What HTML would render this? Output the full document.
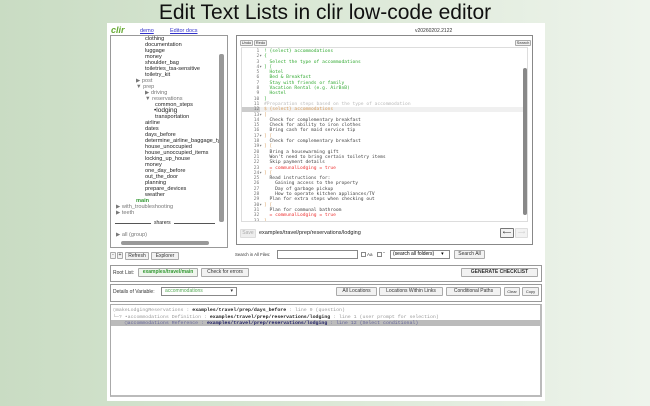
<!DOCTYPE html>
<html><head><meta charset="utf-8"><style>
*{margin:0;padding:0;box-sizing:border-box}
body{width:650px;height:406px;overflow:hidden;background:linear-gradient(90deg,#c9dcc3 0%,#dbe8d6 50%,#eef4ec 100%);font-family:"Liberation Sans",sans-serif;position:relative}
.a{position:absolute;white-space:nowrap}
h1{position:absolute;left:0;width:650px;top:1px;text-align:center;font-weight:normal;font-size:21px;color:#111}
#panel{position:absolute;left:107px;top:23px;width:438px;height:378px;background:#fff}
.tree{left:110px;top:35px;width:118px;height:213px;border:1px solid #999;background:#fff;overflow:hidden;font-size:5.6px;color:#222}
.tree div{position:absolute;white-space:nowrap;line-height:6px}
.btn{position:absolute;border:1px solid #aaa;background:#f2f2f2;font-size:5px;color:#333;text-align:center;border-radius:1px}
.box{position:absolute;border:1px solid #999}
.code{position:absolute;left:241px;top:47px;width:287px;height:175px;border:1px solid #ddd;font-family:"DejaVu Sans Mono",monospace;font-size:4.6px;overflow:hidden}
.ln{position:absolute;left:0;width:20px;text-align:right;color:#777;white-space:pre;line-height:5.3px}
.tx{position:absolute;left:22px;color:#3a3;white-space:pre;line-height:5.3px}
.tx span{line-height:5.3px}
</style></head><body>
<h1>Edit Text Lists in clir low-code editor</h1>
<div id="panel"></div>
<div class="a" style="left:111px;top:25px;font-size:9px;font-style:italic;color:#6a3;font-weight:bold">clir</div>
<div class="a" style="left:140px;top:28px;font-size:5.5px;color:#33c;text-decoration:underline">demo</div>
<div class="a" style="left:170px;top:28px;font-size:5.5px;color:#33c;text-decoration:underline">Editor docs</div>
<div class="a" style="left:415px;top:28px;font-size:5px;color:#333">v20260202.2122</div>

<div class="a tree">
<div style="left:34px;top:0">clothing</div>
<div style="left:34px;top:6px">documentation</div>
<div style="left:34px;top:12px">luggage</div>
<div style="left:34px;top:18px">money</div>
<div style="left:34px;top:24px">shoulder_bag</div>
<div style="left:34px;top:30px">toiletries_tsa-sensitive</div>
<div style="left:34px;top:36px">toiletry_kit</div>
<div style="left:25px;top:42px;color:#777">▶ post</div>
<div style="left:25px;top:48px;color:#777">▼ prep</div>
<div style="left:34px;top:54px;color:#777">▶ driving</div>
<div style="left:34px;top:60px;color:#777">▼ reservations</div>
<div style="left:44px;top:66px">common_steps</div>
<div style="left:43px;top:72px;font-size:6.5px">•lodging</div>
<div style="left:44px;top:78px">transportation</div>
<div style="left:34px;top:84px">airline</div>
<div style="left:34px;top:90px">dates</div>
<div style="left:34px;top:96px">days_before</div>
<div style="left:34px;top:102px">determine_airline_baggage_typ</div>
<div style="left:34px;top:108px">house_unoccupied</div>
<div style="left:34px;top:114px">house_unoccupied_items</div>
<div style="left:34px;top:120px">locking_up_house</div>
<div style="left:34px;top:126px">money</div>
<div style="left:34px;top:132px">one_day_before</div>
<div style="left:34px;top:138px">out_the_door</div>
<div style="left:34px;top:144px">planning</div>
<div style="left:34px;top:150px">prepare_devices</div>
<div style="left:34px;top:156px">weather</div>
<div style="left:25px;top:162px;color:#393;font-weight:bold">main</div>
<div style="left:5px;top:168px;color:#777">▶ with_troubleshooting</div>
<div style="left:5px;top:174px;color:#777">▶ teeth</div>
<div style="left:4px;top:187px;width:100px;height:1px;background:#555"></div>
<div style="left:40px;top:184px;background:#fff;padding:0 3px;font-size:5px">sharers</div>
<div style="left:5px;top:196px;color:#777">▶ all (group)</div>
<div style="left:108px;top:18px;width:5px;height:168px;background:#999;border-radius:2px"></div>
<div style="left:10px;top:205px;width:88px;height:4px;background:#999;border-radius:2px"></div>
</div>

<div class="box" style="left:236px;top:35px;width:297px;height:210px;border:1px solid #888"></div>
<div class="btn" style="left:240px;top:40px;width:13px;height:6px;font-size:4px;line-height:4px">Undo</div>
<div class="btn" style="left:254px;top:40px;width:13px;height:6px;font-size:4px;line-height:4px">Redo</div>
<div class="btn" style="left:515px;top:40px;width:16px;height:6px;font-size:4px;line-height:4px">Search</div>
<div class="code">
<div style="position:absolute;left:0;top:59px;width:285px;height:5.3px;background:#f0f0f0"></div>
<div style="position:absolute;left:0;top:59px;width:18px;height:5.3px;background:#ccc"></div>
<div style="position:absolute;left:281px;top:20px;width:4px;height:147px;background:#888;border-radius:2px"></div>
<div class="ln" style="top:1px">1 
2▾
3 
4▾
5 
6 
7 
8 
9 
10 
11 
12 
13▾
14 
15 
16 
17▾
18 
19▾
20 
21 
22 
23 
24▾
25 
26 
27 
28 
29 
30▾
31 
32 
33 </div>
<div class="tx" style="top:1px">! {select} accommodations
{
  Select the type of accommodations
] [
  Hotel
  Bed &amp; Breakfast
  Stay with friends or family
  Vacation Rental (e.g. AirBnB)
  Hostel
]
<span style="color:#bbb">#Preparation steps based on the type of accommodation</span>
<span style="color:#d9a060">$ {select} accommodations</span>
<span style="color:#d9a060">[</span>
<span style="color:#444">  Check for complementary breakfast
  Check for ability to iron clothes
  Bring cash for maid service tip</span>
<span style="color:#d9a060">] [</span>
<span style="color:#444">  Check for complementary breakfast</span>
<span style="color:#d9a060">] [</span>
<span style="color:#444">  Bring a housewarming gift
  Won't need to bring certain toiletry items
  Skip payment details</span>
<span style="color:#e33">  = communalLodging = true</span>
<span style="color:#d9a060">] [</span>
<span style="color:#444">  Read instructions for:
    Gaining access to the property
    Day of garbage pickup
    How to operate kitchen appliances/TV
  Plan for extra steps when checking out</span>
<span style="color:#d9a060">] [</span>
<span style="color:#444">  Plan for communal bathroom</span>
<span style="color:#e33">  = communalLodging = true</span>
<span style="color:#d9a060">]</span></div>
</div>
<div class="btn" style="left:240px;top:229px;width:16px;height:9px;color:#aaa;background:#eee;border-color:#ddd;line-height:7px">Save</div>
<div class="a" style="left:259px;top:230px;font-size:5.5px;color:#222">examples/travel/prep/reservations/lodging</div>
<div class="btn" style="left:500px;top:228px;width:14px;height:10px;border-color:#777;line-height:8px;font-size:6px">⟵</div>
<div class="btn" style="left:515px;top:228px;width:13px;height:10px;color:#ccc;border-color:#ddd;line-height:8px">⟶</div>

<div class="btn" style="left:110px;top:252px;width:6px;height:7px;line-height:5px">-</div>
<div class="btn" style="left:117px;top:252px;width:6px;height:7px;line-height:5px">+</div>
<div class="btn" style="left:125px;top:252px;width:24px;height:8px;line-height:6px">Refresh</div>
<div class="btn" style="left:151px;top:252px;width:28px;height:8px;line-height:6px">Explorer</div>
<div class="a" style="left:235px;top:252px;font-size:4.3px;color:#333">Search in All Files:</div>
<div class="box" style="left:277px;top:250px;width:81px;height:9px;border-color:#888"></div>
<div class="box" style="left:361px;top:252px;width:5px;height:5px;border-color:#888"></div>
<div class="a" style="left:367px;top:252px;font-size:4.5px;color:#333">Aa</div>
<div class="box" style="left:377px;top:252px;width:5px;height:5px;border-color:#888"></div>
<div class="a" style="left:383px;top:251px;font-size:4.5px;color:#333">"</div>
<div class="box" style="left:390px;top:250px;width:60px;height:9px;border-color:#888;font-size:5px;padding-left:2px;line-height:7px">(search all folders) &nbsp;&nbsp;&nbsp;&nbsp;▾</div>
<div class="btn" style="left:454px;top:250px;width:31px;height:9px;line-height:7px">Search All</div>

<div class="box" style="left:110px;top:265px;width:432px;height:17px"></div>
<div class="a" style="left:113px;top:270px;font-size:5px;color:#333">Root List:</div>
<div class="btn" style="left:138px;top:268px;width:60px;height:9px;color:#393;font-weight:bold;background:#f0f6ee;line-height:7px">examples/travel/main</div>
<div class="btn" style="left:201px;top:268px;width:48px;height:9px;line-height:7px">Check for errors</div>
<div class="btn" style="left:461px;top:268px;width:77px;height:9px;font-weight:bold;line-height:7px">GENERATE CHECKLIST</div>

<div class="box" style="left:110px;top:284px;width:432px;height:18px"></div>
<div class="a" style="left:113px;top:289px;font-size:5px;color:#333">Details of Variable:</div>
<div class="box" style="left:161px;top:287px;width:76px;height:9px;border-color:#888;font-size:5px;color:#5a5;padding-left:3px;line-height:7px">accommodations<span style="position:absolute;right:3px;color:#333">▾</span></div>
<div class="btn" style="left:336px;top:287px;width:41px;height:9px;line-height:7px">All Locations</div>
<div class="btn" style="left:379px;top:287px;width:64px;height:9px;line-height:7px">Locations Within Links</div>
<div class="btn" style="left:446px;top:287px;width:55px;height:9px;line-height:7px">Conditional Paths</div>
<div class="btn" style="left:504px;top:287px;width:16px;height:9px;line-height:7px;font-size:4px">Clear</div>
<div class="btn" style="left:522px;top:287px;width:17px;height:9px;line-height:7px;font-size:4px">Copy</div>

<div class="box" style="left:110px;top:304px;width:432px;height:93px;border-color:#aaa;border-right:2px solid #bbb;border-bottom:2px solid #bbb"></div>
<div style="position:absolute;left:111px;top:320px;width:429px;height:6px;background:#bbb"></div>
<div class="a" style="left:113px;top:307px;font-family:'Liberation Mono',monospace;font-size:4.9px;line-height:8px;color:#999">
<div>◯makeLodgingReservations : <b style="color:#222">examples/travel/prep/days_before</b> : line 9 (question)</div>
<div style="margin-top:-1px">└─? •accommodations Definition : <b style="color:#222">examples/travel/prep/reservations/lodging</b> : line 1 (user prompt for selection)</div>
<div style="margin-top:-2px;color:#669">&nbsp;&nbsp;&nbsp;&nbsp;◯accommodations Reference : <b style="color:#226">examples/travel/prep/reservations/lodging</b> : line 12 (Select conditional)</div>
</div>
</body></html>
